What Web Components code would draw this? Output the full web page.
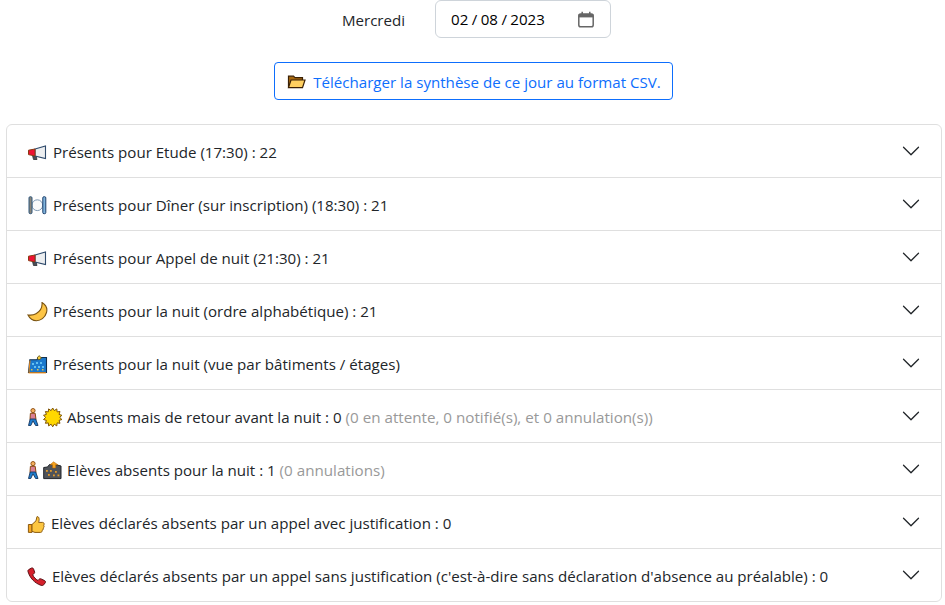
<!DOCTYPE html>
<html lang="fr">
<head>
<meta charset="utf-8">
<style>
  body { margin: 0; background: #fff; color: #212529; font: 15.1px/24px "Open Sans", "Noto Sans", sans-serif; }
</style>
</head>
<body>
<date-bar></date-bar>
<csv-button></csv-button>
<day-accordion>
  <day-item><day-emoji name="horn"></day-emoji> Présents pour Etude (17:30) : 22</day-item>
  <day-item><day-emoji name="plate"></day-emoji> Présents pour Dîner (sur inscription) (18:30) : 21</day-item>
  <day-item><day-emoji name="horn"></day-emoji> Présents pour Appel de nuit (21:30) : 21</day-item>
  <day-item><day-emoji name="moon"></day-emoji> Présents pour la nuit (ordre alphabétique) : 21</day-item>
  <day-item><day-emoji name="map"></day-emoji> Présents pour la nuit (vue par bâtiments / étages)</day-item>
  <day-item><day-emoji name="walk"></day-emoji><day-emoji name="sun"></day-emoji> Absents mais de retour avant la nuit : 0 <small>(0 en attente, 0 notifié(s), et 0 annulation(s))</small></day-item>
  <day-item><day-emoji name="walk"></day-emoji><day-emoji name="night"></day-emoji> Elèves absents pour la nuit : 1 <small>(0 annulations)</small></day-item>
  <day-item><day-emoji name="thumb"></day-emoji> Elèves déclarés absents par un appel avec justification : 0</day-item>
  <day-item><day-emoji name="phone"></day-emoji> Elèves déclarés absents par un appel sans justification (c'est-à-dire sans déclaration d'absence au préalable) : 0</day-item>
</day-accordion>
<script>
// points of the sun's spiky outline
function sunPoints() {
  let pts = [];
  for (let i = 0; i < 28; i++) {
    const r = i % 2 ? 7 : 9.4;
    const a = i * Math.PI / 14;
    pts.push((9.7 + r * Math.sin(a)).toFixed(1) + "," + (9.4 - r * Math.cos(a)).toFixed(1));
  }
  return pts.join(" ");
}

// box width and drawing of each emoji, 1 unit = 1px, 20px high
const EMOJI = {
  horn: [22, `<path d="M5.5 12.5 L6.5 16.5 H10 L9 13Z" fill="#4a4f57" stroke="#2b2f35" stroke-width=".8"/>
    <path d="M8 6 L18.5 3 V15.5 L8 13Z" fill="#eceef0" stroke="#2e4a6b" stroke-width="1.1"/>
    <path d="M1.5 7.2 L8 6 V13 L1.5 11.6Z" fill="#ee1133" stroke="#8a3a12" stroke-width="1"/>`],
  plate: [22, `<circle cx="10.3" cy="9.2" r="5.4" fill="#fafafa" stroke="#7f9ab5" stroke-width="1"/>
    <rect x="2" y=".7" width="3" height="17" rx="1.2" fill="#8a8478" stroke="#2f587f" stroke-width="1"/>
    <rect x="15.8" y=".7" width="3" height="17" rx="1.2" fill="#7fb4dc" stroke="#1d3f6b" stroke-width="1"/>`],
  moon: [22, `<path d="M15 .5 C19 3 20.5 7 19.5 10.5 C18 16 13.5 18.7 9.5 18.7 C5.5 18.7 2.5 16 1 13 C4 13.3 7 13 9 11.8 C13 9.5 15.5 5 15 .5Z" fill="#fdc545" stroke="#7a5312" stroke-width="1.1"/>`],
  map: [22, `<path d="M2.8 4.7 H10 L11 2.5 H19.5 V17.5 H1.5Z" fill="#1b78cc" stroke="#12304f" stroke-width="1.1"/>
    <path d="M1.5 17.8 H19" stroke="#ee8c1a" stroke-width="1.2"/><path d="M2 17 L3 5.5" stroke="#ee8c1a" stroke-width="1"/>
    <path d="M12 .6 L14.6 3 L11.8 5 L10.2 3Z" fill="#f6cd3d" stroke="#4f4210" stroke-width=".7"/>
    <g fill="#62c0f2"><rect x="5" y="8" width="2" height="2"/><rect x="9" y="7" width="2" height="2"/><rect x="13" y="7" width="2" height="2"/><rect x="7" y="11" width="2" height="2"/><rect x="11" y="11" width="2" height="2"/><rect x="15" y="11" width="2" height="2"/></g>
    <g fill="#e4c04a"><rect x="4" y="14" width="1.5" height="1.5"/><rect x="10" y="14" width="1.5" height="1.5"/><rect x="15" y="14" width="1.5" height="1.5"/></g>`],
  walk: [16, `<circle cx="6" cy="2.6" r="2.1" fill="#f5b25f" stroke="#8a4a10" stroke-width=".9"/>
    <path d="M3.4 5.3 H8.2 L9 11.5 H3Z" fill="#d97f95" stroke="#8a4a10" stroke-width="1"/>
    <path d="M3.2 11 L1.5 17.5 H3.8 L6 12.8 L8.6 17.5 H11 L8.7 11Z" fill="#1f7fd0" stroke="#16345e" stroke-width=".9"/>`],
  sun: [20, `<polygon points="${sunPoints()}" fill="#ffd800" stroke="#7f5408" stroke-width="1"/>`],
  night: [20, `<path d="M.7 17.6 V6.5 L4.5 6 L6.5 3.5 H12 L18 5 V17.6Z" fill="#4f5359" stroke="#20242a" stroke-width="1"/>
    <path d="M10.5 .8 L15 3.8 H12.7 V7 H9.5 V3.8 H7Z" fill="#f6a21e" stroke="#a8660c" stroke-width=".5"/>
    <g fill="#e59b2a"><rect x="3" y="9" width="1.8" height="1.8"/><rect x="7" y="9" width="1.8" height="1.8"/><rect x="12" y="10" width="1.8" height="1.8"/><rect x="5" y="13" width="1.8" height="1.8"/><rect x="10" y="13.5" width="1.8" height="1.8"/><rect x="14.5" y="13.5" width="1.8" height="1.8"/></g>`],
  thumb: [20, `<path d="M1.4 10.5 H5 V18.4 H1.4Z" fill="#f7a823" stroke="#8a5a10" stroke-width="1"/>
    <path d="M5 10.5 L9 6.8 L10 2.6 C12.2 2.4 12.6 5.6 11.6 8.4 H15.6 C17.3 8.4 17.5 10.6 16.6 11.2 C17.4 12 17.2 13.5 16.2 14 C16.6 15 16 16 15.2 16.3 C15.3 17.5 14.6 18.4 13.6 18.4 H8 L5 17.4Z" fill="#fcc640" stroke="#8a5a10" stroke-width="1"/>`],
  phone: [21, `<path d="M1.7 2.6 L4.6 1 C5.7 .7 6.3 1.3 6.6 2.1 L7.6 5.1 C7.8 6 7.3 6.6 6.5 7 L5.6 7.6 C6.5 10 8.6 12.2 11 13.5 L11.9 12.4 C12.5 11.7 13.3 11.6 14 11.9 L17.6 13.6 C18.5 14 18.7 14.9 18.3 15.7 L16.7 17.8 C16.1 18.5 15.2 18.7 14 18.3 C7.6 16.2 2.8 10.8 1 4.6 C.8 3.7 1 3.1 1.7 2.6Z" fill="#d5202b" stroke="#5a0f13" stroke-width="1"/>`]
};

class DayEmoji extends HTMLElement {
  constructor() {
    super();
    const [w, body] = EMOJI[this.getAttribute("name")];
    this.attachShadow({ mode: "open" }).innerHTML = `
      <style>
        :host { display: inline-block; vertical-align: -5px; line-height: 0; }
      </style>
      <svg width="${w}" height="20" viewBox="0 0 ${w} 20" fill="none">${body}</svg>`;
  }
}
customElements.define("day-emoji", DayEmoji);

class DateBar extends HTMLElement {
  constructor() {
    super();
    this.attachShadow({ mode: "open" }).innerHTML = `
      <style>
        :host { display: flex; justify-content: center; align-items: center; gap: 30px; height: 38px; padding-left: 8px; }
        .field { width: 143px; height: 36px; border: 1px solid #ced4da; border-radius: 6px; display: flex; align-items: center; justify-content: space-between; padding: 0 16px 0 15px; color: #000; }
        .value { word-spacing: -.5px; }
        .label { padding-top: 2px; }
      </style>
      <span class="label">Mercredi</span>
      <div class="field">
        <span class="value">02 / 08 / 2023</span>
        <svg width="16" height="17" viewBox="0 0 16 17"><rect x=".8" y="3" width="14.4" height="12.8" rx="1.8" fill="none" stroke="#666" stroke-width="1.5"/><rect x=".8" y="3" width="14.4" height="3.4" fill="#666"/><path d="M4.2 .8v3M11.8 .8v3" stroke="#666" stroke-width="1.5"/></svg>
      </div>`;
  }
}
customElements.define("date-bar", DateBar);

class CsvButton extends HTMLElement {
  constructor() {
    super();
    this.attachShadow({ mode: "open" }).innerHTML = `
      <style>
        :host { display: flex; justify-content: center; margin: 24px 0; padding-left: 2px; }
        button { font: inherit; color: #0d6efd; background: #fff; border: 1px solid #0d6efd; border-radius: 4px; height: 38px; padding: 1px 11px 0 12px; display: flex; align-items: center; gap: 7px; }
      </style>
      <button>
        <svg width="19" height="15" viewBox="0 0 19 15"><path d="M1.5 13.5 V2.2 H6.5 L8 3.7 H15.5 V6" fill="#a8690f" stroke="#3a2005" stroke-width="1.2"/><path d="M4 6 H18 L15.5 13.6 H1.5Z" fill="#ffd060" stroke="#3a2005" stroke-width="1.2"/></svg>
        Télécharger la synthèse de ce jour au format CSV.
      </button>`;
  }
}
customElements.define("csv-button", CsvButton);

class DayAccordion extends HTMLElement {
  constructor() {
    super();
    this.attachShadow({ mode: "open" }).innerHTML = `
      <style>
        :host { display: block; margin: 0 3px 0 6px; border: 1px solid #dfdfdf; border-radius: 6px; }
      </style>
      <slot></slot>`;
  }
}
customElements.define("day-accordion", DayAccordion);

class DayItem extends HTMLElement {
  constructor() {
    super();
    this.attachShadow({ mode: "open" }).innerHTML = `
      <style>
        :host { display: flex; align-items: center; justify-content: space-between; height: 52px; padding: 0 20px; border-bottom: 1px solid #dfdfdf; }
        :host(:last-child) { border-bottom: 0; }
        ::slotted(small) { color: #999; font-size: 15.2px; }
        .label { padding-top: 2px; }
        svg { flex: none; }
      </style>
      <div class="label"><slot></slot></div>
      <svg width="20" height="20" viewBox="0 0 16 16"><path fill-rule="evenodd" fill="#212529" d="M1.646 4.646a.5.5 0 0 1 .708 0L8 10.293l5.646-5.647a.5.5 0 0 1 .708.708l-6 6a.5.5 0 0 1-.708 0l-6-6a.5.5 0 0 1 0-.708z"/></svg>`;
  }
}
customElements.define("day-item", DayItem);
</script>
</body>
</html>
